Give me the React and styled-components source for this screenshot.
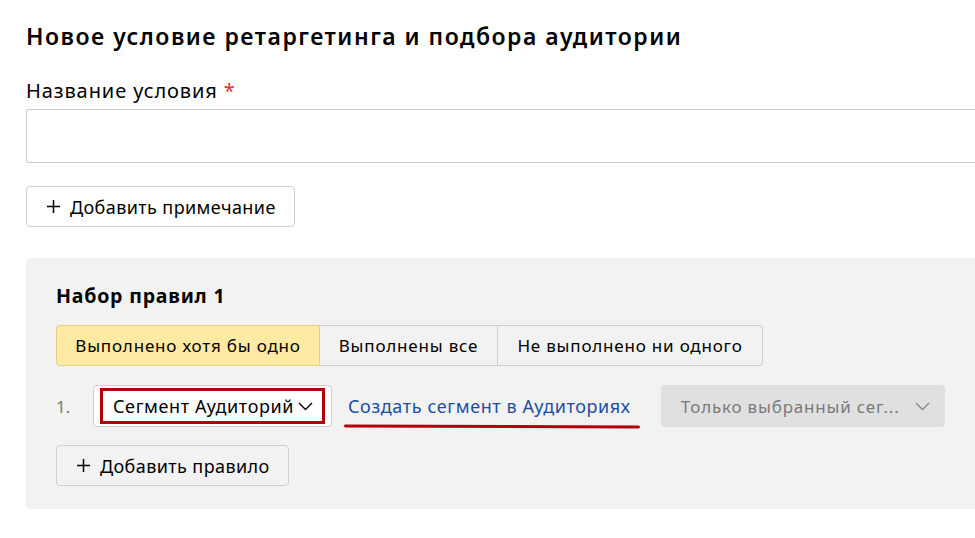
import React from 'react';
import styled, { createGlobalStyle } from 'styled-components';

const Global = createGlobalStyle`
        html, body {
                margin: 0;
                padding: 0;
                background: #fff;
                overflow: hidden;
        }
        body {
                font-family: "Noto Sans", "Open Sans", Arial, sans-serif;
                color: #000;
        }
`

const Page = styled.div`
        padding: 22px 0 0 26px;
        width: 1100px;
`
const Title = styled.h1`
        margin: 0;
        font-size: 23px;
        line-height: 28px;
        font-weight: 600;
        letter-spacing: 1.5px;
`
const Label = styled.div`
        margin-top: 29px;
        font-size: 20px;
        line-height: 24px;
        letter-spacing: 0.9px;
        > span {
                color: #e62e2e;
                margin-left: 6px;
        }
`
const TextInput = styled.input`
        display: block;
        box-sizing: border-box;
        margin-top: 6px;
        width: 1000px;
        height: 54px;
        border: 1px solid #cccccc;
        border-radius: 2px;
        background: #fff;
        outline: none;
`
const Button = styled.button`
        display: flex;
        align-items: center;
        gap: 10px;
        box-sizing: border-box;
        height: 41px;
        padding: 0 18px 0 20px;
        margin-top: ${p => p.$top || 0}px;
        border: 1px solid #cfcfcf;
        border-radius: 4px;
        background: ${p => p.$bg || '#fff'};
        font-family: inherit;
        font-size: 18px;
        letter-spacing: 0.4px;
        color: #000;
        cursor: pointer;
`
const Panel = styled.section`
        margin-top: 31px;
        width: 1000px;
        box-sizing: border-box;
        background: #f2f2f2;
        border-radius: 5px;
        padding: 24px 30px 23px;
`
const PanelTitle = styled.h2`
        margin: 0;
        font-size: 19.5px;
        line-height: 28px;
        font-weight: 700;
        letter-spacing: 0.8px;
`
const Tabs = styled.div`
        display: flex;
        margin-top: 15px;
`
const Tab = styled.button`
        box-sizing: border-box;
        height: 41px;
        width: ${p => p.$w}px;
        border: 1px solid ${p => p.$active ? '#e3cf86' : '#cfcfcf'};
        border-left-width: ${p => p.$first ? 1 : 0}px;
        background: ${p => p.$active ? '#feeaa3' : '#f2f2f2'};
        font-family: inherit;
        font-size: 17px;
        letter-spacing: 0.8px;
        color: #000;
        padding: 0;
        white-space: nowrap;
        &:first-child {
                border-radius: 4px 0 0 4px;
        }
        &:last-child {
                border-radius: 0 4px 4px 0;
        }
`
const Row = styled.div`
        display: flex;
        align-items: center;
        height: 42px;
        margin-top: 19px;
`
const Num = styled.span`
        width: 37px;
        font-size: 17px;
        color: #777;
`
const SelectBox = styled.div`
        box-sizing: border-box;
        height: 42px;
        width: 239px;
        border: 1px solid #d0d0d0;
        border-radius: 4px;
        background: #fff;
        padding: 2px 6px;
`
const Highlight = styled.div`
        box-sizing: border-box;
        height: 100%;
        border: 3px solid #b3000f;
        display: flex;
        align-items: center;
        gap: 4px;
        padding-left: 10px;
        font-size: 18px;
        letter-spacing: 0.6px;
        white-space: nowrap;
`
const LinkWrap = styled.span`
        position: relative;
        margin-left: 16px;
        font-size: 18px;
        letter-spacing: 0.6px;
        color: #1d4ca6;
        white-space: nowrap;
        &::after {
                content: '';
                position: absolute;
                left: -4px;
                right: -9px;
                bottom: -10px;
                height: 3px;
                border-radius: 2px;
                background: #b3000f;
                transform: rotate(0.2deg);
        }
`
const Disabled = styled.div`
        display: flex;
        align-items: center;
        justify-content: space-between;
        box-sizing: border-box;
        margin-left: 30px;
        width: 284px;
        height: 42px;
        padding: 0 15px 0 20px;
        border-radius: 4px;
        background: #e0e0e0;
        color: #7a7a7a;
        font-size: 17px;
        letter-spacing: 0.8px;
        white-space: nowrap;
`

const Plus = () => (
        <svg width="13" height="13" viewBox="0 0 13 13">
                <path d="M6.5 0v13M0 6.5h13" stroke="#000" strokeWidth="1.5" fill="none" />
        </svg>
)
const Chevron = ({ color = '#000' }) => (
        <svg width="15" height="9" viewBox="0 0 15 9">
                <path d="M1 1l6.5 6.5L14 1" stroke={color} strokeWidth="1.4" fill="none" />
        </svg>
)

const App = () => (
        <Page>
                <Global />
                <Title>Новое условие ретаргетинга и подбора аудитории</Title>
                <Label>Название условия<span>*</span></Label>
                <TextInput />
                <Button $top={23}><Plus />Добавить примечание</Button>
                <Panel>
                        <PanelTitle>Набор правил 1</PanelTitle>
                        <Tabs>
                                <Tab $w={264} $active $first>Выполнено хотя бы одно</Tab>
                                <Tab $w={178}>Выполнены все</Tab>
                                <Tab $w={265}>Не выполнено ни одного</Tab>
                        </Tabs>
                        <Row>
                                <Num>1.</Num>
                                <SelectBox>
                                        <Highlight>Сегмент Аудиторий <Chevron /></Highlight>
                                </SelectBox>
                                <LinkWrap>Создать сегмент в Аудиториях</LinkWrap>
                                <Disabled>Только выбранный сег... <Chevron color="#888" /></Disabled>
                        </Row>
                        <Button $top={18} $bg="#f2f2f2"><Plus />Добавить правило</Button>
                </Panel>
        </Page>
)

export default App;
